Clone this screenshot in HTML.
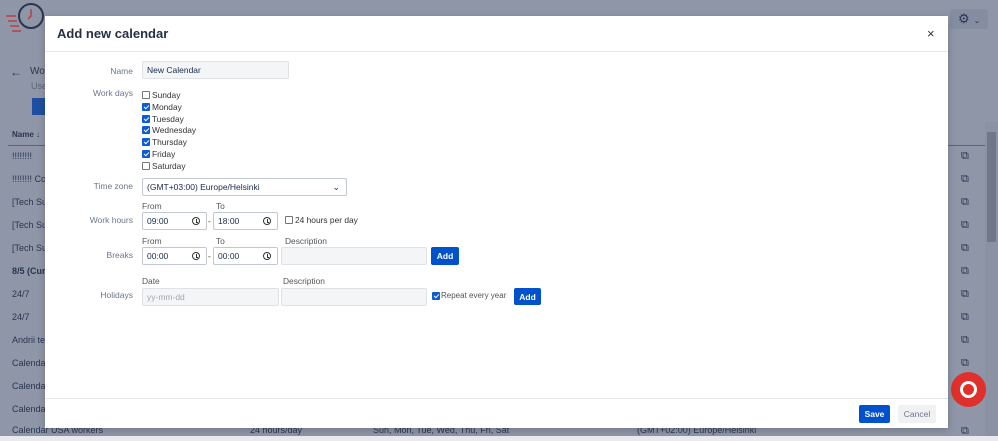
<!DOCTYPE html>
<html><head><meta charset="utf-8"><style>
*{box-sizing:border-box;margin:0;padding:0}
body{width:998px;height:441px;overflow:hidden;font-family:"Liberation Sans",sans-serif;background:#8e96a8;position:relative;color:#172b4d}
.a{position:absolute;white-space:nowrap}
.bg{font-size:9px;color:#2a3550}
.rowline{position:absolute;left:8px;width:977px;height:1px;background:#8792a4}
.modal{position:absolute;left:45px;top:16px;width:903px;height:412px;background:#fff;box-shadow:0 2px 8px rgba(0,0,0,.2)}
.lbl{position:absolute;font-size:8.5px;color:#6b778c;text-align:right;width:90px;left:0}
.t{font-size:8.4px;color:#333}
.inp{position:absolute;background:#f4f5f7;border:1px solid #dfe1e6;border-radius:2px;font-size:8.5px;padding-left:4px;display:flex;align-items:center;color:#172b4d}
.tm{background:#fff;border:1px solid #c1c7d0}
.cb{position:absolute;width:8px;height:8px;border:1px solid #767676;border-radius:1px;background:#fff}
.cb.on{background:#0b5cd6;border-color:#0b5cd6}
.cb.on::after{content:"";position:absolute;left:2px;top:0px;width:2px;height:4px;border:solid #fff;border-width:0 1px 1px 0;transform:rotate(45deg)}
.btn{position:absolute;background:#0052cc;color:#fff;font-size:8.5px;font-weight:bold;display:flex;align-items:center;justify-content:center;border-radius:2px}
.clk{position:absolute;right:6px;top:4px;width:8px;height:8px;border:1px solid #333;border-radius:50%}
.clk::after{content:"";position:absolute;left:2.5px;top:1px;width:1.5px;height:2.5px;border:solid #333;border-width:0 0 1px 1px}
</style></head><body>
<svg class="a" style="left:4px;top:2px" width="42" height="34" viewBox="0 0 42 34"><circle cx="27" cy="14" r="12" fill="none" stroke="#2a3550" stroke-width="2"/><path d="M27 7v7l-3 3" stroke="#b34040" stroke-width="1.5" fill="none"/><path d="M2 14h10M4 19h9M6 24h9M8 29h9" stroke="#b34040" stroke-width="1.5"/></svg>
<div class="a" style="left:950px;top:9px;width:38px;height:20px;background:#858da0;border-radius:3px"></div>
<div class="a" style="left:958px;top:11px;font-size:13px;color:#2a3550">⚙<span style="font-size:8px;margin-left:4px">⌄</span></div>
<div class="a" style="left:10px;top:65px;font-size:12px;color:#2a3550">←</div>
<div class="a bg" style="left:30px;top:66px;font-size:10px">Wo</div>
<div class="a bg" style="left:31px;top:81px;color:#5a6478">Use</div>
<div class="a" style="left:32px;top:98px;width:14px;height:17px;background:#1f4fa0"></div>
<div class="a bg" style="left:12px;top:130px;font-weight:bold;font-size:8px">Name ↓</div>
<div class="rowline" style="top:145px;background:#5a6478"></div>
<div class="a bg" style="left:12px;top:151px">!!!!!!!!</div>
<div class="a bg" style="left:12px;top:174px">!!!!!!!! Cop</div>
<div class="a bg" style="left:12px;top:197px">[Tech Sup</div>
<div class="a bg" style="left:12px;top:220px">[Tech Sup</div>
<div class="a bg" style="left:12px;top:243px">[Tech Sup</div>
<div class="a bg" style="left:12px;top:266px;font-weight:bold">8/5 (Curr</div>
<div class="a bg" style="left:12px;top:289px">24/7</div>
<div class="a bg" style="left:12px;top:312px">24/7</div>
<div class="a bg" style="left:12px;top:335px">Andrii tes</div>
<div class="a bg" style="left:12px;top:358px">Calendar</div>
<div class="a bg" style="left:12px;top:381px">Calendar</div>
<div class="a bg" style="left:12px;top:404px">Calendar</div>
<div class="a bg" style="left:12px;top:425px">Calendar USA workers</div>
<div class="a bg" style="left:250px;top:425px">24 hours/day</div>
<div class="a bg" style="left:373px;top:425px">Sun, Mon, Tue, Wed, Thu, Fri, Sat</div>
<div class="a bg" style="left:637px;top:425px">(GMT+02:00) Europe/Helsinki</div>
<div class="a" style="left:0;top:436px;width:998px;height:5px;background:#e8eaee"></div>
<div class="a" style="left:985px;top:122px;width:13px;height:314px;background:#8a92a3"></div>
<div class="a" style="left:987px;top:132px;width:9px;height:110px;background:#6f7789"></div>
<div class="a bg" style="left:961px;top:150px;font-size:11px">⧉</div>
<div class="a bg" style="left:961px;top:173px;font-size:11px">⧉</div>
<div class="a bg" style="left:961px;top:196px;font-size:11px">⧉</div>
<div class="a bg" style="left:961px;top:219px;font-size:11px">⧉</div>
<div class="a bg" style="left:961px;top:242px;font-size:11px">⧉</div>
<div class="a bg" style="left:961px;top:265px;font-size:11px">⧉</div>
<div class="a bg" style="left:961px;top:288px;font-size:11px">⧉</div>
<div class="a bg" style="left:961px;top:311px;font-size:11px">⧉</div>
<div class="a bg" style="left:961px;top:334px;font-size:11px">⧉</div>
<div class="a bg" style="left:961px;top:357px;font-size:11px">⧉</div>
<div class="a bg" style="left:961px;top:425px;font-size:11px">⧉</div>
<div class="a" style="left:951px;top:372px;width:35px;height:35px;border-radius:50%;background:#e0302b"></div>
<div class="a" style="left:960px;top:381px;width:17px;height:17px;border-radius:50%;border:3px solid #fff"></div>

<div class="modal">
<div class="a" style="left:12px;top:10px;font-size:13px;font-weight:600;color:#253045">Add new calendar</div>
<div class="a" style="left:882px;top:10px;font-size:13px;color:#333">×</div>
<div class="a" style="left:0;top:35px;width:903px;height:1px;background:#e4e6ea"></div>

<div class="lbl" style="top:50px;left:-2px">Name</div>
<div class="inp" style="left:97px;top:45px;width:147px;height:18px">New Calendar</div>

<div class="lbl" style="top:72px;left:-2px">Work days</div>
<div class="cb" style="left:97px;top:75px"></div><div class="a t" style="left:107px;top:74px">Sunday</div>
<div class="cb on" style="left:97px;top:87px"></div><div class="a t" style="left:107px;top:86px">Monday</div>
<div class="cb on" style="left:97px;top:99px"></div><div class="a t" style="left:107px;top:98px">Tuesday</div>
<div class="cb on" style="left:97px;top:110px"></div><div class="a t" style="left:107px;top:109px">Wednesday</div>
<div class="cb on" style="left:97px;top:122px"></div><div class="a t" style="left:107px;top:121px">Thursday</div>
<div class="cb on" style="left:97px;top:134px"></div><div class="a t" style="left:107px;top:133px">Friday</div>
<div class="cb" style="left:97px;top:146px"></div><div class="a t" style="left:107px;top:145px">Saturday</div>

<div class="lbl" style="top:165px;left:-2px">Time zone</div>
<div class="inp tm" style="left:97px;top:162px;width:205px;height:18px">(GMT+03:00) Europe/Helsinki<span style="position:absolute;right:6px;top:3px;font-size:9px">⌄</span></div>

<div class="a t" style="left:97px;top:185px;color:#555">From</div>
<div class="a t" style="left:171px;top:185px;color:#555">To</div>
<div class="lbl" style="top:199px;left:-2px">Work hours</div>
<div class="inp tm" style="left:97px;top:196px;width:65px;height:18px">09:00<span class="clk"></span></div>
<div class="a t" style="left:163px;top:200px">-</div>
<div class="inp tm" style="left:168px;top:196px;width:65px;height:18px">18:00<span class="clk"></span></div>
<div class="cb" style="left:240px;top:200px"></div><div class="a t" style="left:250px;top:199px">24 hours per day</div>

<div class="a t" style="left:97px;top:220px;color:#555">From</div>
<div class="a t" style="left:171px;top:220px;color:#555">To</div>
<div class="a t" style="left:240px;top:220px;color:#555">Description</div>
<div class="lbl" style="top:234px;left:-2px">Breaks</div>
<div class="inp tm" style="left:97px;top:231px;width:65px;height:18px">00:00<span class="clk"></span></div>
<div class="a t" style="left:163px;top:235px">-</div>
<div class="inp tm" style="left:168px;top:231px;width:65px;height:18px">00:00<span class="clk"></span></div>
<div class="inp" style="left:236px;top:231px;width:146px;height:18px"></div>
<div class="btn" style="left:386px;top:231px;width:28px;height:18px">Add</div>

<div class="a t" style="left:97px;top:260px;color:#555">Date</div>
<div class="a t" style="left:238px;top:260px;color:#555">Description</div>
<div class="lbl" style="top:274px;left:-2px">Holidays</div>
<div class="inp" style="left:97px;top:272px;width:137px;height:18px;color:#a0a6b1">yy-mm-dd</div>
<div class="inp" style="left:236px;top:272px;width:146px;height:18px"></div>
<div class="cb on" style="left:387px;top:276px"></div><div class="a t" style="left:396px;top:275px;color:#555;font-size:8px">Repeat every year</div>
<div class="btn" style="left:469px;top:272px;width:27px;height:17px">Add</div>

<div class="a" style="left:0;top:382px;width:903px;height:1px;background:#e4e6ea"></div>
<div class="btn" style="left:814px;top:389px;width:31px;height:18px">Save</div>
<div class="a" style="left:853px;top:389px;width:38px;height:18px;background:#f0f1f3;color:#6b778c;font-size:8.5px;display:flex;align-items:center;justify-content:center;border-radius:2px">Cancel</div>
</div>
</body></html>
